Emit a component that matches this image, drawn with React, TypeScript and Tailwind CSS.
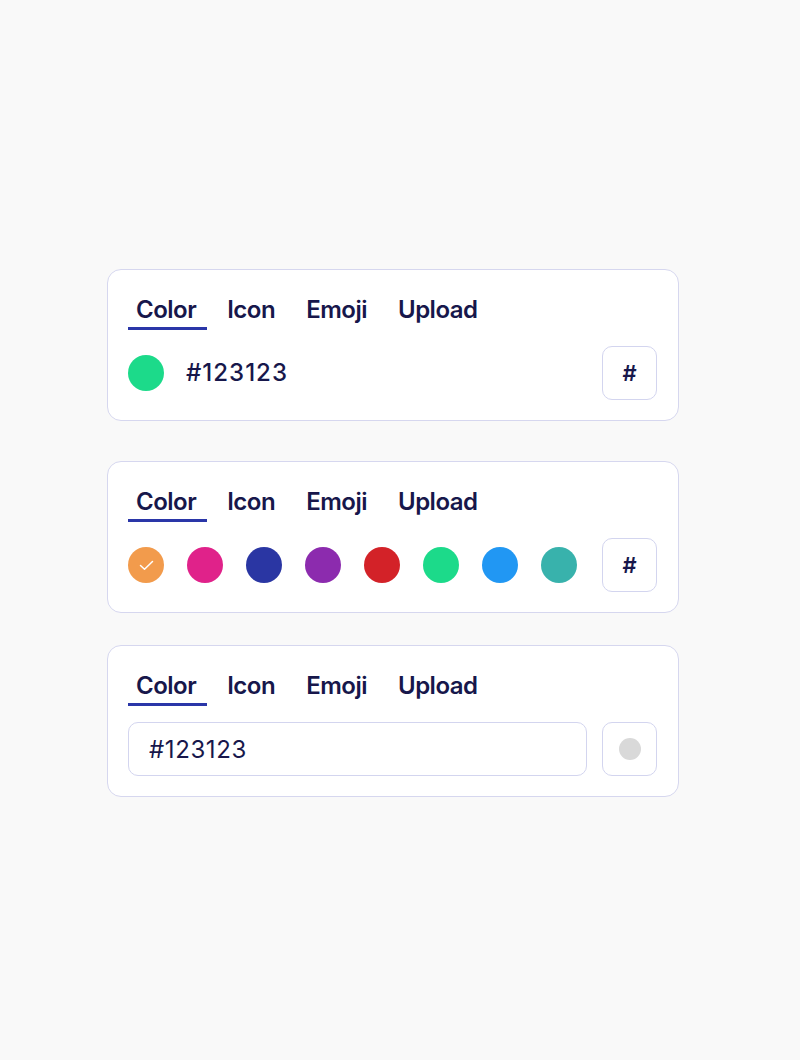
import { useState } from "react";

const tabs = ["Color", "Icon", "Emoji", "Upload"];

const swatches = [
  "#F29B4C",
  "#E0228A",
  "#2A36A3",
  "#8C2BAE",
  "#D32228",
  "#1CDA8A",
  "#2197F3",
  "#38B2AC",
];

function Tabs() {
  const [active, setActive] = useState("Color");
  return (
    <div className="flex gap-3">
      {tabs.map((tab) => (
        <button
          key={tab}
          onClick={() => setActive(tab)}
          className={
            "pl-2 pr-[11px] pt-[2px] leading-[35px] text-2xl font-semibold tracking-[-0.5px] text-[#17174B] border-b-[3px] " +
            (active === tab ? "border-[#2A36A8]" : "border-transparent")
          }
        >
          {tab}
        </button>
      ))}
    </div>
  );
}

function HashButton() {
  return (
    <button className="w-[55px] h-[54px] shrink-0 flex items-center justify-center rounded-[10px] border border-[#D3D5EF] bg-white text-[22px] font-semibold text-[#17174B]">
      #
    </button>
  );
}

function Card({ children, className }: { children: React.ReactNode; className?: string }) {
  return (
    <div className={"w-[572px] bg-white border border-[#D6D7EF] rounded-[14px] pl-5 pr-[21px] py-5 " + (className ?? "")}>
      <Tabs />
      <div className="mt-4 flex items-center h-[54px]">{children}</div>
    </div>
  );
}

export default function App() {
  return (
    <div className="min-h-[1060px] bg-[#F9F9F9] pl-[107px] pt-[269px] font-['Inter',sans-serif]">
      {/* selected color */}
      <Card>
        <span className="w-9 h-9 rounded-full bg-[#1CDA8A] shrink-0" />
        <span className="ml-[22px] text-2xl font-medium tracking-[1px] text-[#17174B]">#123123</span>
        <div className="flex-1" />
        <HashButton />
      </Card>

      {/* preset swatches */}
      <Card className="mt-10">
        <div className="flex gap-[23px]">
          {swatches.map((c, i) => (
            <span
              key={c}
              className="w-9 h-9 rounded-full flex items-center justify-center"
              style={{ backgroundColor: c }}
            >
              {i === 0 && (
                <svg width="15" height="11" viewBox="0 0 15 11" fill="none">
                  <path d="M1.5 5.5 L5.5 9.2 L13.5 1.5" stroke="white" strokeWidth="1.5" strokeLinecap="round" strokeLinejoin="round" />
                </svg>
              )}
            </span>
          ))}
        </div>
        <div className="flex-1" />
        <HashButton />
      </Card>

      {/* hex input */}
      <Card className="mt-8">
        <input
          defaultValue="#123123"
          className="flex-1 min-w-0 h-[54px] rounded-[10px] border border-[#D3D5EF] px-5 text-2xl tracking-[0.6px] text-[#17174B] outline-none"
        />
        <button className="ml-[15px] w-[55px] h-[54px] shrink-0 flex items-center justify-center rounded-[10px] border border-[#D3D5EF] bg-white">
          <span className="w-[22px] h-[22px] rounded-full bg-[#D9D9D9]" />
        </button>
      </Card>
    </div>
  );
}
